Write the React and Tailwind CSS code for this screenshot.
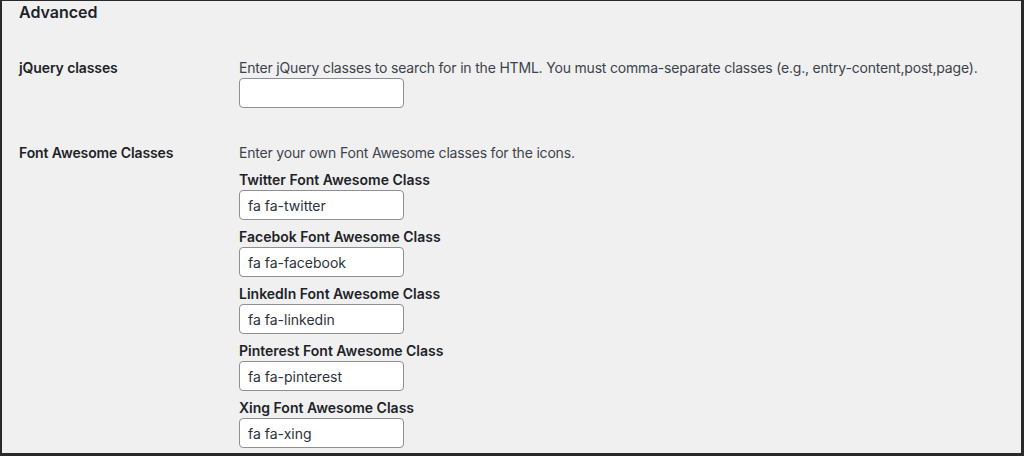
import React from "react";

const fields = [
  { label: "Twitter Font Awesome Class", value: "fa fa-twitter" },
  { label: "Facebok Font Awesome Class", value: "fa fa-facebook" },
  { label: "LinkedIn Font Awesome Class", value: "fa fa-linkedin" },
  { label: "Pinterest Font Awesome Class", value: "fa fa-pinterest" },
  { label: "Xing Font Awesome Class", value: "fa fa-xing" },
];

const TextInput = ({ value = "" }) => (
  <input
    type="text"
    defaultValue={value}
    className="block w-[165px] h-[30px] px-[8px] bg-white border border-[#8c8f94] rounded-[4px] text-[14px] text-[#2c3338] outline-none"
  />
);

const App = () => {
  return (
    <div
      className="w-[1024px] h-[456px] bg-[#f0f0f1] border-l-2 border-t border-r-[3px] border-b-[3px] border-[#2a2a2a] overflow-hidden text-[#1d2327]"
      style={{ fontFamily: "Inter, 'Liberation Sans', sans-serif" }}
    >
      <h2 className="pl-[17px] text-[16px] leading-[22px] font-semibold">Advanced</h2>

      {/* jQuery classes */}
      <div className="flex mt-[35px]">
        <div className="w-[237px] shrink-0 pl-[17px] text-[14px] leading-[20px] font-semibold tracking-[-0.1px]">jQuery classes</div>
        <div>
          <p className="text-[14px] leading-[20px] text-[#3c434a] tracking-[-0.19px]">
            Enter jQuery classes to search for in the HTML. You must comma-separate classes (e.g., entry-content,post,page).
          </p>
          <TextInput />
        </div>
      </div>

      {/* font awesome */}
      <div className="flex mt-[35px]">
        <div className="w-[237px] shrink-0 pl-[17px] text-[14px] leading-[20px] font-semibold tracking-[-0.1px]">Font Awesome Classes</div>
        <div className="flex flex-col gap-[7px]">
          <p className="text-[14px] leading-[20px] text-[#3c434a] tracking-[-0.19px]">Enter your own Font Awesome classes for the icons.</p>
          {fields.map((f) => (
            <div key={f.label}>
              <div className="text-[14px] leading-[20px] font-semibold">{f.label}</div>
              <TextInput value={f.value} />
            </div>
          ))}
        </div>
      </div>
    </div>
  );
};

export default App;
